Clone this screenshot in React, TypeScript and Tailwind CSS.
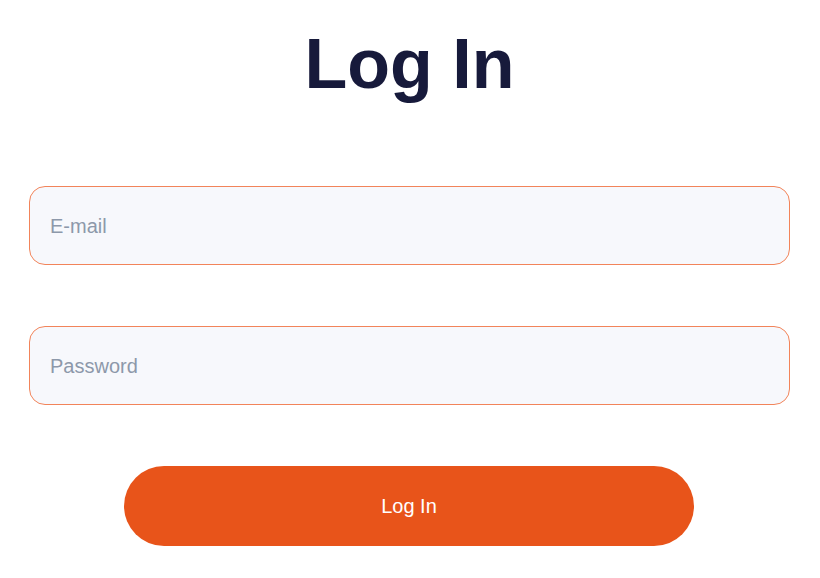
export default function App() {
  return (
    <main
      className="flex min-h-[578px] flex-col items-center bg-white pl-[29px] pr-[30px] pt-[29px]"
      style={{ fontFamily: '"Liberation Sans", Arial, sans-serif' }}
    >
      <h1 className="text-[70px] font-bold leading-none text-[#171a3b]">Log In</h1>
      <form className="mt-[87px] flex w-full flex-col">
        <input
          type="email"
          placeholder="E-mail"
          className="h-[79px] w-full rounded-[16px] border border-[#f2845a] bg-[#f7f8fc] px-[20px] pt-[1px] text-[20px] text-[#171a3b] outline-none placeholder:text-[#8d98aa]"
        />
        <input
          type="password"
          placeholder="Password"
          className="mt-[61px] h-[79px] w-full rounded-[16px] border border-[#f2845a] bg-[#f7f8fc] px-[20px] pt-[1px] text-[20px] text-[#171a3b] outline-none placeholder:text-[#8d98aa]"
        />
        <button
          type="button"
          className="ml-[95px] mt-[61px] h-[80px] w-[570px] rounded-full bg-[#e8541a] text-[20px] text-white"
        >
          Log In
        </button>
      </form>
    </main>
  );
}
